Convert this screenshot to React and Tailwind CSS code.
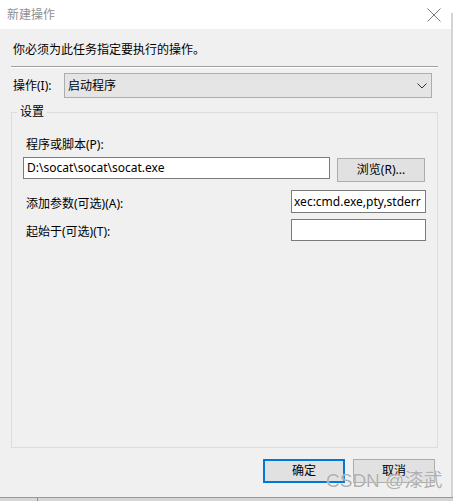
import React from "react";

const font = "font-['Noto_Sans','Noto_Sans_CJK_SC',sans-serif]";

function CloseIcon() {
  return (
    <svg width="14" height="14" viewBox="0 0 14 14" fill="none" stroke="#7a7a7a" strokeWidth="1">
      <path d="M0.5 0.5 L13.5 13.5 M13.5 0.5 L0.5 13.5" />
    </svg>
  );
}

function Chevron() {
  return (
    <svg width="10" height="6" viewBox="0 0 10 6" fill="none" stroke="#333" strokeWidth="1">
      <path d="M0.5 0.5 L5 5 L9.5 0.5" />
    </svg>
  );
}

export default function App() {
  return (
    <div className={`${font} w-[453px] h-[501px] flex flex-col overflow-hidden text-[12px] text-black relative`}>
      <div className="flex flex-1">
        <div className="w-[451px] flex flex-col bg-[#f0f0f0]">
          {/* title bar */}
          <div className="h-[29px] bg-white flex items-center justify-between pl-[7px] pr-[10px]">
            <span className="text-[#8f8f8f] leading-[16px]">新建操作</span>
            <CloseIcon />
          </div>

          <div className="pl-[11px] pr-[13px] flex flex-col">
            <p className="mt-[13px] ml-[2px] leading-[16px]">你必须为此任务指定要执行的操作。</p>
            <div className="mt-[8px] border-t border-[#a0a0a0] border-b border-b-white" />

            <div className="mt-[5px] flex items-center">
              <span className="ml-[2px] w-[51px] leading-[16px]">操作(I):</span>
              <div className="w-[368px] h-[25px] bg-[#e5e5e5] border border-[#adadad] flex items-center justify-between pl-[3px] pr-[4px]">
                <span className="leading-[16px]">启动程序</span>
                <Chevron />
              </div>
            </div>

            {/* group box */}
            <div className="mt-[14px] h-[336px] border border-[#dcdcdc] flex flex-col pl-[11px] pr-[11px]">
              <span className="-mt-[9px] -ml-[6px] w-fit px-[3px] bg-[#f0f0f0] leading-[16px]">设置</span>

              <span className="mt-[17px] ml-[3px] leading-[16px]">程序或脚本(P):</span>
              <div className="mt-[4px] flex items-start">
                <div className="w-[307px] h-[22px] bg-white border border-[#7a7a7a] flex items-center pl-[3px]">
                  <span className="leading-[16px]">D:\socat\socat\socat.exe</span>
                </div>
                <button className="ml-[7px] mt-[1px] w-[88px] h-[24px] bg-[#e1e1e1] border border-[#adadad] flex items-center justify-center leading-[16px]">
                  浏览(R)...
                </button>
              </div>

              <div className="mt-[8px] flex items-start justify-between">
                <span className="ml-[3px] mt-[6px] leading-[16px]">添加参数(可选)(A):</span>
                <div className="w-[135px] h-[23px] bg-white border border-[#7a7a7a] flex items-center pl-[2px] overflow-hidden whitespace-nowrap">
                  <span className="leading-[16px]">xec:cmd.exe,pty,stderr</span>
                </div>
              </div>

              <div className="mt-[6px] flex items-start justify-between">
                <span className="ml-[3px] mt-[5px] leading-[16px]">起始于(可选)(T):</span>
                <div className="w-[135px] h-[22px] bg-white border border-[#7a7a7a]" />
              </div>
            </div>

            <div className="mt-[11px] flex justify-end gap-[8px] pr-[3px]">
              <button className="w-[82px] h-[24px] bg-[#e1e1e1] border-2 border-[#0078d7] flex items-center justify-center leading-[16px]">
                确定
              </button>
              <button className="w-[82px] h-[24px] bg-[#e1e1e1] border border-[#adadad] flex items-center justify-center leading-[16px]">
                取消
              </button>
            </div>
          </div>
        </div>
        <div className="w-[2px] mt-[13px] bg-[#d4d4d4]" />
      </div>
      <div className="h-[4px] border-t border-[#9a9a9a] bg-[#d6d6d6] flex">
        <div className="ml-[37px] w-[1px] bg-[#8a8a8a]" />
      </div>

      <span className="absolute left-[326px] top-[469px] text-[19px] leading-[24px] text-[#9a9a9a]/80 font-['Liberation_Sans','Noto_Sans_CJK_SC',sans-serif] [text-shadow:0_0_1px_#fff]">
        CSDN @漆武
      </span>
    </div>
  );
}
